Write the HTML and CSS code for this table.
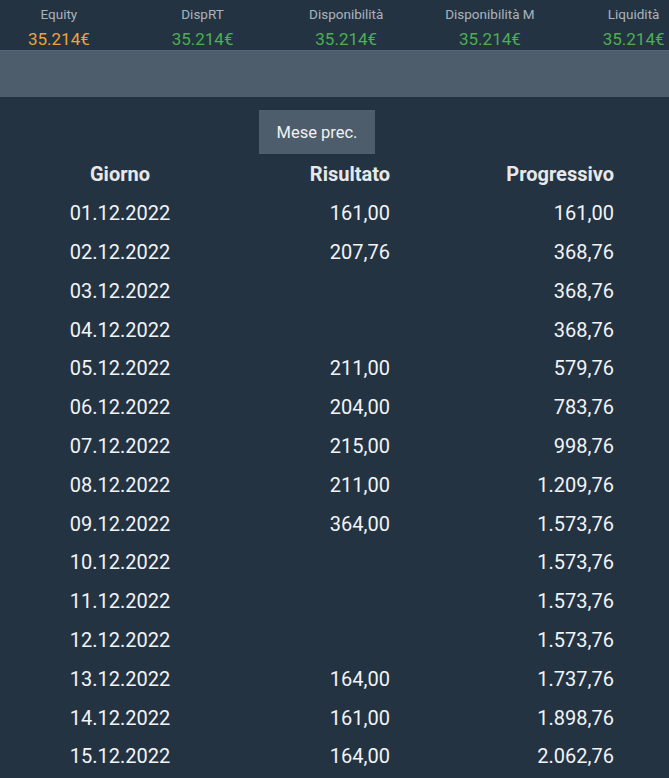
FILE: index.html
```html
<!DOCTYPE html>
<html lang="it">
<head>
<meta charset="utf-8">
<title>Risultati</title>
<link rel="stylesheet" href="styles.css">
</head>
<body>
<div class="page">
  <div class="stats">
    <div class="stat"><div class="label">Equity</div><div class="value orange">35.214€</div></div>
    <div class="stat"><div class="label">DispRT</div><div class="value">35.214€</div></div>
    <div class="stat"><div class="label">Disponibilità</div><div class="value">35.214€</div></div>
    <div class="stat"><div class="label">Disponibilità M</div><div class="value">35.214€</div></div>
    <div class="stat"><div class="label">Liquidità</div><div class="value">35.214€</div></div>
  </div>
  <div class="band"></div>
  <div class="controls"><button class="btn">Mese prec.</button></div>
  <div class="table">
    <div class="row head"><span class="c1">Giorno</span><span class="c2">Risultato</span><span class="c3">Progressivo</span></div>
    <div class="row"><span class="c1">01.12.2022</span><span class="c2">161,00</span><span class="c3">161,00</span></div>
    <div class="row"><span class="c1">02.12.2022</span><span class="c2">207,76</span><span class="c3">368,76</span></div>
    <div class="row"><span class="c1">03.12.2022</span><span class="c2"></span><span class="c3">368,76</span></div>
    <div class="row"><span class="c1">04.12.2022</span><span class="c2"></span><span class="c3">368,76</span></div>
    <div class="row"><span class="c1">05.12.2022</span><span class="c2">211,00</span><span class="c3">579,76</span></div>
    <div class="row"><span class="c1">06.12.2022</span><span class="c2">204,00</span><span class="c3">783,76</span></div>
    <div class="row"><span class="c1">07.12.2022</span><span class="c2">215,00</span><span class="c3">998,76</span></div>
    <div class="row"><span class="c1">08.12.2022</span><span class="c2">211,00</span><span class="c3">1.209,76</span></div>
    <div class="row"><span class="c1">09.12.2022</span><span class="c2">364,00</span><span class="c3">1.573,76</span></div>
    <div class="row"><span class="c1">10.12.2022</span><span class="c2"></span><span class="c3">1.573,76</span></div>
    <div class="row"><span class="c1">11.12.2022</span><span class="c2"></span><span class="c3">1.573,76</span></div>
    <div class="row"><span class="c1">12.12.2022</span><span class="c2"></span><span class="c3">1.573,76</span></div>
    <div class="row"><span class="c1">13.12.2022</span><span class="c2">164,00</span><span class="c3">1.737,76</span></div>
    <div class="row"><span class="c1">14.12.2022</span><span class="c2">161,00</span><span class="c3">1.898,76</span></div>
    <div class="row"><span class="c1">15.12.2022</span><span class="c2">164,00</span><span class="c3">2.062,76</span></div>
  </div>
</div>
</body>
</html>
```

FILE: styles.css
```css
html, body {
  margin: 0;
  padding: 0;
  background: #243342;
  overflow: hidden;
}
body {
  font-family: Roboto, "Liberation Sans", sans-serif;
  color: #eef0f2;
}
.page {
  width: 669px;
  overflow: hidden;
}
.stats {
  display: grid;
  grid-template-columns: repeat(5, 143.7px);
  width: 718.5px;
  margin-left: -13px;
  height: 50px;
  border-bottom: 1px solid #56677a;
}
.stat {
  display: flex;
  flex-direction: column;
  align-items: center;
}
.label {
  font-size: 13.5px;
  line-height: 16px;
  margin-top: 6px;
  color: #aab3bd;
}
.value {
  font-size: 17px;
  line-height: 20px;
  margin-top: 7px;
  color: #4caf50;
}
.value.orange {
  color: #f0a23c;
}
.band {
  height: 46px;
  background: #4d5d6c;
}
.controls {
  display: flex;
  padding: 13px 0 0 259px;
}
.btn {
  width: 116px;
  height: 44px;
  border: 0;
  background: #4d5d6c;
  color: #f2f2f2;
  font-family: Roboto, "Liberation Sans", sans-serif;
  font-size: 16.5px;
  padding: 0;
}
.table {
  padding-left: 30px;
  padding-top: 1px;
}
.row {
  display: grid;
  grid-template-columns: 180px 180px 224px;
  height: 38.8px;
  align-items: center;
  font-size: 20px;
  color: #f2f4f6;
}
.row.head {
  font-weight: bold;
  font-size: 20px;
  color: #e6e8ea;
}
.c1 { text-align: center; }
.c2, .c3 { text-align: right; }
```
